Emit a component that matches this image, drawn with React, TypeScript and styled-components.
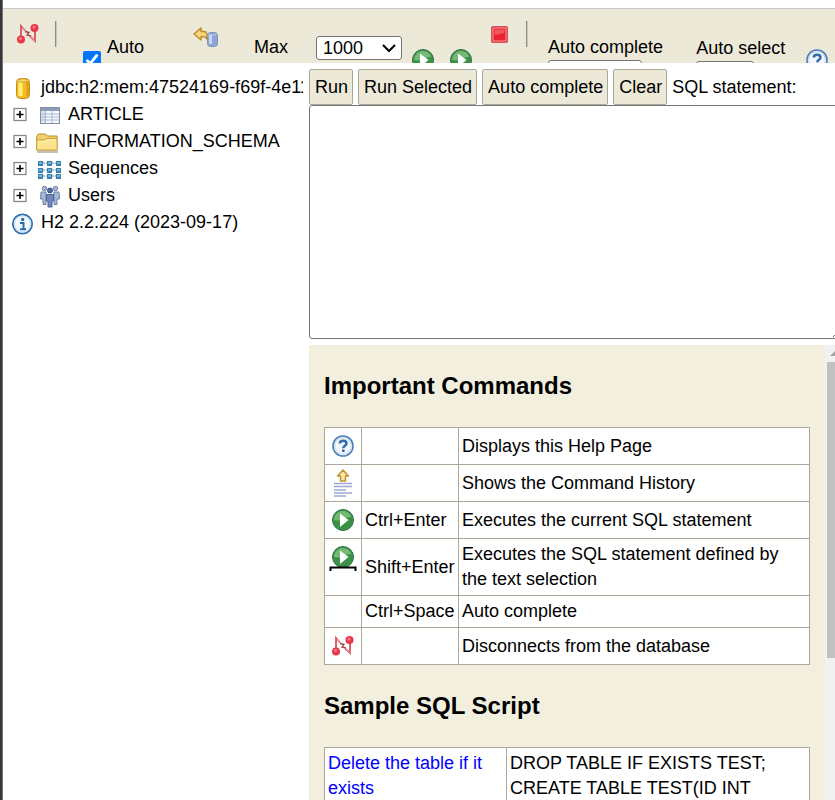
import React from 'react';
import styled, { createGlobalStyle } from 'styled-components';

const GlobalStyle = createGlobalStyle`
  * { box-sizing: border-box; }
  body {
    margin: 0;
    background: #fff;
    color: #000;
    font: 18px/25px "Liberation Sans", Arial, sans-serif;
  }
  button, select, textarea, input { font: inherit; color: inherit; }
`;

const Page = styled.div`
  display: flex;
  flex-direction: column;
  height: 100vh;
  overflow: hidden;
  border-left: 2px solid #37363b;
  box-shadow: inset 1px 0 #77777b;
  padding: 8px 0 0 1px;
`;

const Toolbar = styled.header`
  display: flex;
  flex: none;
  align-items: flex-start;
  height: 55px;
  overflow: hidden;
  border-top: 1px solid #c5cacb;
  background: #ece9d8;
  padding-left: 10px;
`;

const ToolItem = styled.div<{ $before?: number; $top?: number }>`
  display: flex;
  flex: none;
  margin-left: ${p => p.$before ?? 0}px;
  margin-top: ${p => p.$top ?? 0}px;
`;

const IconButton = styled.button`
  display: flex;
  padding: 0;
  border: 0;
  background: none;
`;

const Divider = styled.div`
  width: 2px;
  height: 26px;
  border-left: 1px solid #8e8d88;
  border-right: 1px solid #c9c7ba;
`;

const Check = styled.input`
  width: 18px;
  height: 18px;
  margin: 0;
  accent-color: #0075ff;
`;

const Stack = styled.label`
  display: flex;
  flex-direction: column;
  white-space: nowrap;
`;

const DropFrame = styled.div`
  display: grid;
  align-items: center;
  justify-items: end;
  > * { grid-area: 1 / 1; }
`;

const Drop = styled.select<{ $width: number }>`
  width: ${p => p.$width}px;
  height: 24px;
  padding: 0 6px;
  border: 1px solid #767676;
  border-radius: 3px;
  background: #fff;
  line-height: 22px;
  appearance: none;
`;

const Chevron = styled.svg`
  width: 14px;
  height: 10px;
  margin-right: 6px;
  pointer-events: none;
`;

const Body = styled.div`
  display: grid;
  grid-template-columns: 300px minmax(0, 1fr);
  column-gap: 6px;
  flex: 1;
  min-height: 0;
`;

const Tree = styled.nav`
  overflow: hidden;
  padding: 11px 0 0 9px;
`;

const TreeRow = styled.a`
  display: flex;
  align-items: center;
  height: 27px;
  color: #000;
  text-decoration: none;
  white-space: nowrap;
`;

const Expander = styled.svg`
  flex: none;
  width: 16px;
  height: 16px;
  margin-right: 4px;
`;

const TreeIcon = styled.svg`
  flex: none;
  width: 30px;
  height: 30px;
  margin-right: 6px;
`;

const RootIcon = styled(TreeIcon)`
  width: 24px;
  height: 26px;
  margin-right: 5px;
`;

const Main = styled.main`
  display: flex;
  flex-direction: column;
  min-width: 0;
  min-height: 0;
`;

const Query = styled.form`
  padding-top: 6px;
`;

const Actions = styled.div`
  display: flex;
  align-items: center;
  gap: 5px;
  white-space: nowrap;
`;

const Button = styled.button`
  height: 36px;
  padding: 0 4px 0 5px;
  border: 1px solid #aca899;
  border-radius: 2px;
  background: #ece9d8;
`;

const Editor = styled.textarea`
  display: block;
  width: calc(100% + 7px);
  height: 234px;
  border: 1px solid #767676;
  border-radius: 3px;
  background: #fff;
`;

const Results = styled.div`
  display: flex;
  flex: 1;
  min-height: 0;
  margin-top: 6px;
  overflow: hidden;
`;

const Help = styled.section`
  flex: 1;
  min-width: 0;
  overflow: hidden;
  background: #f2efde;
  padding: 0 15px;
`;

const Heading = styled.h2`
  margin: 26px 0;
  font-size: 24px;
  line-height: 30px;
`;

const Grid = styled.table`
  width: 100%;
  border-collapse: collapse;
  background: #fff;
  table-layout: fixed;
`;

const Cell = styled.td<{ $top?: boolean }>`
  padding: 3px;
  border: 1px solid #aca899;
  vertical-align: ${p => (p.$top ? 'top' : 'middle')};
  svg { display: block; }
`;

const CommandRow = styled.tr<{ $plain?: boolean }>`
  height: ${p => (p.$plain ? 32 : 37)}px;
`;

const SampleLink = styled.a`
  color: #00f;
  text-decoration: none;
`;

const Track = styled.div`
  display: flex;
  flex: none;
  flex-direction: column;
  width: 10px;
  background: #f1f1f1;
  padding-left: 2px;
`;

const Arrow = styled.svg`
  width: 8px;
  height: 17px;
`;

const Thumb = styled.div`
  height: 296px;
  background: #c1c1c1;
`;

const box = { width: 30, height: 30, viewBox: '0 0 30 30', 'aria-hidden': true } as const;

const Disconnect = () => (
  <svg {...box}>
    <path d="M8 20V7l4 4.500M22 10v12l-5-4.500" fill="none" stroke="#d34b55" strokeWidth="1.700" />
    <path d="M9 8l4 4.500M17 17.500l5 4.500" stroke="#e6949a" strokeWidth="1.200" />
    <path d="M12 12.500l4 1-2 2.500 4 1" fill="none" stroke="#9c4a4c" strokeWidth="1.300" />
    <circle cx="8" cy="20.500" r="4" fill="#e8384a" />
    <circle cx="21.500" cy="9" r="4" fill="#e8384a" />
    <circle cx="7.500" cy="19.500" r="1.600" fill="#f77b86" />
    <circle cx="21" cy="8" r="1.600" fill="#f77b86" />
  </svg>
);

const Rollback = () => (
  <svg {...box}>
    <path d="M4 13l7-6v3.500h3c2 0 3 2 3 4V18c-2-2.500-3-2.500-6-2.500V19z" fill="#f6d57c" stroke="#bd8a24" strokeWidth="1.400" strokeLinejoin="round" />
    <rect x="17.500" y="11.500" width="10" height="14" rx="3" fill="#8da4d2" stroke="#8194be" />
    <path d="M20.500 14v9" stroke="#c8d6f1" strokeWidth="3" />
    <path d="M18.500 13c2 1.500 6 1.500 8 0" fill="none" stroke="#c3cfe8" />
  </svg>
);

const Play = ({ selected = false }: { selected?: boolean }) => (
  <svg {...box}>
    <circle cx="15" cy="15" r="10.500" fill="#3b9146" stroke="#2f7548" />
    <path d="M6 15a9 9 0 0 1 17.500-3C18 11 15 17 6 15z" fill="#74b974" />
    <path d="M12 8.500l8.500 6.500-8.500 7z" fill="#fff" />
    {selected && <path d="M2.500 29v-3.500h25V29" fill="none" stroke="#000" strokeWidth="2" />}
  </svg>
);

const Stop = () => (
  <svg {...box}>
    <rect x="6.500" y="6.500" width="16" height="16" rx="1" fill="#e8202c" stroke="#d9535a" />
    <rect x="8" y="8" width="13" height="13" fill="#e9232f" stroke="#f2a3a3" />
    <path d="M9.500 15V9.500h10V13z" fill="#f25661" />
  </svg>
);

const HelpIcon = () => (
  <svg {...box}>
    <circle cx="15" cy="15" r="10" fill="#fff" stroke="#4a7fb5" strokeWidth="1.600" />
    <circle cx="15" cy="15" r="8.300" fill="#f4f8fc" stroke="#c3d6ea" />
    <path d="M11.800 12.500c0-3.700 6.700-3.700 6.700 0 0 2.500-3.200 2-3.200 4.700" fill="none" stroke="#2f6cab" strokeWidth="2.500" />
    <rect x="14" y="18.500" width="2.600" height="2.500" fill="#2f6cab" />
  </svg>
);

const History = () => (
  <svg {...box}>
    <path d="M15 2l5.500 6h-3v5h-5V8h-3z" fill="#fbe6a8" stroke="#c4932f" strokeWidth="1.500" strokeLinejoin="round" />
    <path d="M6 15.500h18M6 18.500h18M6 22h12M6 25h18M6 28h12" stroke="#9ba9d3" strokeWidth="1.300" />
  </svg>
);

const Plus = () => (
  <Expander viewBox="0 0 16 16" aria-hidden>
    <rect x="2" y="1.500" width="12" height="12" fill="#fff" stroke="#888" strokeWidth="1.300" />
    <path d="M4.500 7.500h7M8 4v7" stroke="#000" strokeWidth="1.600" />
  </Expander>
);

const TableGlyph = () => (
  <>
    <rect x="4.500" y="6.500" width="19" height="16" fill="#f5f8fd" stroke="#8291aa" />
    <path d="M5 7h18v3H5z" fill="#8d9cb8" />
    <path d="M5 10h4v12H5z" fill="#dbe4f3" />
    <path d="M5 13h18M5 16h18M5 19h18M9.500 10v12M16 10v12" stroke="#a9b6cc" />
  </>
);

const FolderGlyph = () => (
  <>
    <path d="M1 24h21" stroke="#c5c1ad" strokeWidth="2" />
    <path d="M.700 22V8.500L2.500 6h7l2 2h9.500V22z" fill="#f1cf6a" stroke="#b58b2c" />
    <path d="M.700 22V12h8l2-1.500h10.500V22z" fill="#fbe48c" stroke="#c9a044" />
    <path d="M2 13.500h7l2-1.500h9" fill="none" stroke="#fff5bd" />
  </>
);

const SequenceGlyph = () => (
  <>
    {[8, 15, 21].map(y => (
      <g key={y}>
        <path d={`M4 ${y}h19`} stroke="#5b7f95" strokeDasharray="2 1" />
        {[2, 11, 20].map(x => (
          <g key={x}>
            <rect x={x} y={y - 2} width="5" height="5" fill="#3a80ac" />
            <rect x={x + 1} y={y - 1} width="3" height="2" fill="#6fb4da" />
          </g>
        ))}
      </g>
    ))}
  </>
);

const UsersGlyph = () => (
  <>
    <g fill="#a9b8d6" stroke="#6b80ac">
      <circle cx="8.500" cy="6.500" r="2.200" />
      <circle cx="19.500" cy="6.500" r="2.200" />
      <path d="M5 10h5v12.500H7V17H4.500zM23 10h-5v12.500h3V17h2.500z" />
    </g>
    <circle cx="14" cy="8.500" r="2.500" fill="#526b9d" stroke="#344f80" />
    <path d="M10.500 12.500h7v6.500H16v6h-4v-6h-1.500z" fill="#7088ba" stroke="#4b6496" />
  </>
);

const nodes = [
  { name: 'ARTICLE', glyph: <TableGlyph /> },
  { name: 'INFORMATION_SCHEMA', glyph: <FolderGlyph /> },
  { name: 'Sequences', glyph: <SequenceGlyph /> },
  { name: 'Users', glyph: <UsersGlyph /> },
];

const commands = [
  { icon: <HelpIcon />, keys: '', text: 'Displays this Help Page' },
  { icon: <History />, keys: '', text: 'Shows the Command History' },
  { icon: <Play />, keys: 'Ctrl+Enter', text: 'Executes the current SQL statement' },
  { icon: <Play selected />, keys: 'Shift+Enter', text: 'Executes the SQL statement defined by the text selection' },
  { icon: null, keys: 'Ctrl+Space', text: 'Auto complete' },
  { icon: <Disconnect />, keys: '', text: 'Disconnects from the database' },
];

export default function App() {
  return (
    <Page>
      <GlobalStyle />
      <Toolbar>
        <ToolItem $top={10}><IconButton aria-label="Disconnect"><Disconnect /></IconButton></ToolItem>
        <ToolItem $before={12} $top={12}><Divider /></ToolItem>
        <ToolItem $before={26} $top={42}><Check id="commit" type="checkbox" defaultChecked /></ToolItem>
        <ToolItem $before={6} $top={26}><label htmlFor="commit">Auto</label></ToolItem>
        <ToolItem $before={46} $top={12}><IconButton aria-label="Rollback"><Rollback /></IconButton></ToolItem>
        <ToolItem $before={34} $top={26}><label htmlFor="rows">Max</label></ToolItem>
        <ToolItem $before={28} $top={27}>
          <DropFrame>
            <Drop id="rows" $width={86} defaultValue="1000"><option>1000</option></Drop>
            <Chevron viewBox="0 0 14 10" aria-hidden>
              <path d="M1 2l6 6 6-6" fill="none" stroke="#000" strokeWidth="2" />
            </Chevron>
          </DropFrame>
        </ToolItem>
        <ToolItem $before={6} $top={36}><IconButton aria-label="Run"><Play /></IconButton></ToolItem>
        <ToolItem $before={8} $top={36}><IconButton aria-label="Run selected"><Play selected /></IconButton></ToolItem>
        <ToolItem $before={9} $top={11}><IconButton aria-label="Cancel"><Stop /></IconButton></ToolItem>
        <ToolItem $before={11} $top={12}><Divider /></ToolItem>
        <ToolItem $before={20} $top={26}>
          <Stack>Auto complete
            <Drop $width={94}><option>Off</option></Drop>
          </Stack>
        </ToolItem>
        <ToolItem $before={33} $top={27}>
          <Stack>Auto select
            <Drop $width={58}><option>On</option></Drop>
          </Stack>
        </ToolItem>
        <ToolItem $before={17} $top={36}><IconButton aria-label="Help"><HelpIcon /></IconButton></ToolItem>
      </Toolbar>
      <Body>
        <Tree>
          <TreeRow href="#database">
            <RootIcon viewBox="0 0 24 26" aria-hidden>
              <rect x="4.500" y="3.500" width="13" height="20" rx="4" fill="#f4bd20" stroke="#c48a1c" />
              <path d="M8.500 7v14" stroke="#fff07a" strokeWidth="4" />
              <path d="M15.500 7v14" stroke="#d99a16" strokeWidth="2" />
              <ellipse cx="11" cy="5.500" rx="5.500" ry="1.700" fill="#f8d968" stroke="#d29d2c" />
            </RootIcon>
            jdbc:h2:mem:47524169-f69f-4e11
          </TreeRow>
          {nodes.map(n => (
            <TreeRow key={n.name} href={`#${n.name}`}>
              <Plus />
              <TreeIcon viewBox="-4 -1 30 30" aria-hidden overflow="visible">{n.glyph}</TreeIcon>
              {n.name}
            </TreeRow>
          ))}
          <TreeRow href="#version">
            <RootIcon viewBox="0 0 24 26" aria-hidden>
              <circle cx="10.500" cy="14" r="9.700" fill="#fff" stroke="#2f72b0" strokeWidth="1.700" />
              <circle cx="10.500" cy="14" r="8" fill="#f5f9fd" stroke="#cbdded" />
              <rect x="9.200" y="8" width="3" height="3" fill="#256dab" />
              <path d="M8 13h3.500v6M8 19.300h6" fill="none" stroke="#256dab" strokeWidth="2" />
            </RootIcon>
            H2 2.2.224 (2023-09-17)
          </TreeRow>
        </Tree>
        <Main>
          <Query onSubmit={e => e.preventDefault()}>
            <Actions>
              <Button>Run</Button>
              <Button>Run Selected</Button>
              <Button>Auto complete</Button>
              <Button>Clear</Button>
              <label htmlFor="sql">SQL statement:</label>
            </Actions>
            <Editor id="sql" />
          </Query>
          <Results>
            <Help>
              <Heading>Important Commands</Heading>
              <Grid>
                <colgroup><col width="37" /><col width="97" /><col /></colgroup>
                <tbody>
                  {commands.map(c => (
                    <CommandRow key={c.text} $plain={!c.icon}>
                      <Cell $top>{c.icon}</Cell>
                      <Cell>{c.keys}</Cell>
                      <Cell>{c.text}</Cell>
                    </CommandRow>
                  ))}
                </tbody>
              </Grid>
              <Heading>Sample SQL Script</Heading>
              <Grid>
                <colgroup><col width="182" /><col /></colgroup>
                <tbody>
                  <tr>
                    <Cell $top><SampleLink href="#drop">Delete the table if it exists</SampleLink></Cell>
                    <Cell $top>DROP TABLE IF EXISTS TEST;<br />CREATE TABLE TEST(ID INT</Cell>
                  </tr>
                </tbody>
              </Grid>
            </Help>
            <Track aria-hidden>
              <Arrow viewBox="0 0 8 17"><path d="M3 11l5-5v5z" fill="#a3a3a3" /></Arrow>
              <Thumb />
            </Track>
          </Results>
        </Main>
      </Body>
    </Page>
  );
}
